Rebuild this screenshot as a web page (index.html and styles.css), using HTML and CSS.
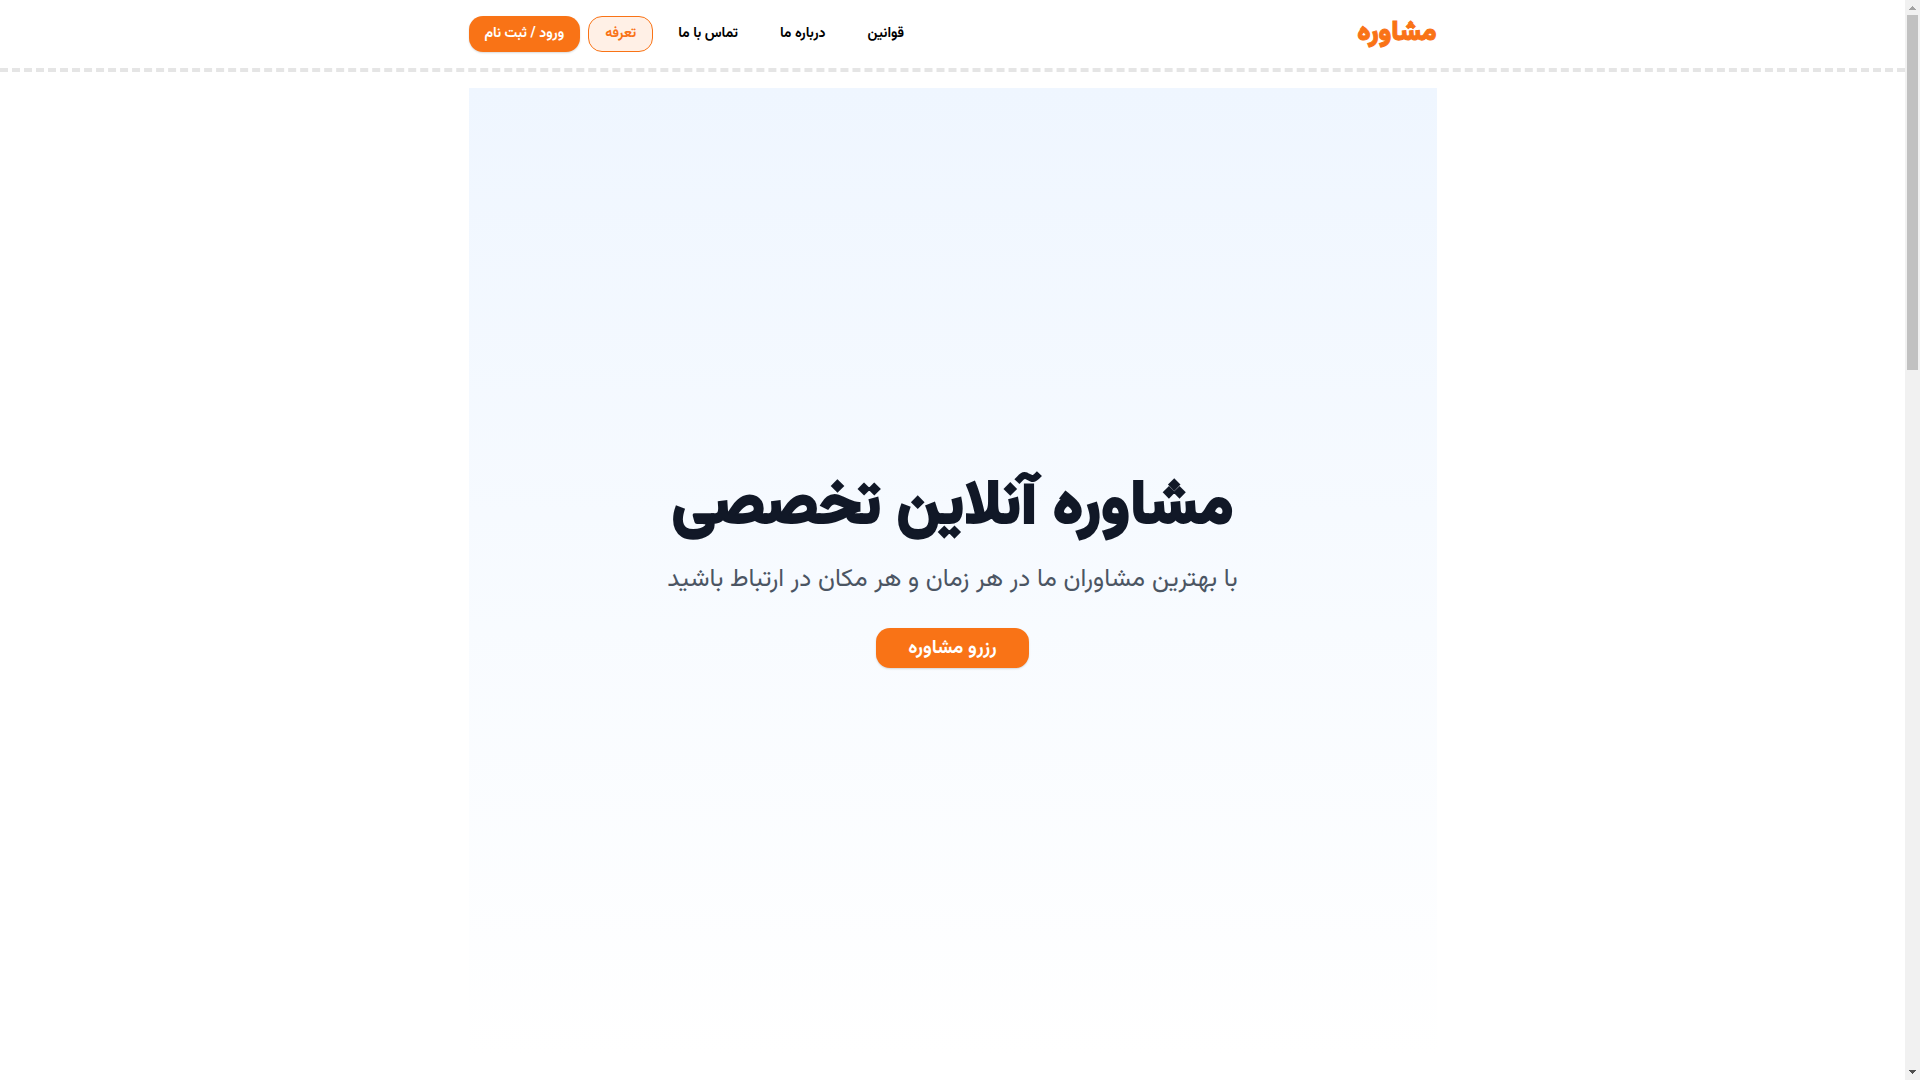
FILE: index.html
```html
<!DOCTYPE html>
<html lang="fa" dir="rtl">
<head>
    <meta charset="UTF-8">
    <meta name="viewport" content="width=device-width, initial-scale=1.0">
    <title>مشاوره</title>
    <link rel="stylesheet" href="styles.css">
</head>
<body>
    <header class="header">
        <div class="container header-inner">
            <a class="logo" href="#">مشاوره</a>
            <nav class="nav">
                <a class="nav-link" href="#">قوانین</a>
                <a class="nav-link" href="#">درباره ما</a>
                <a class="nav-link" href="#">تماس با ما</a>
                <a class="nav-link nav-link-active" href="#">تعرفه</a>
                <button class="btn btn-login" type="button">ورود / ثبت نام</button>
            </nav>
        </div>
    </header>

    <main class="container">
        <section class="hero">
            <h1 class="hero-title">مشاوره آنلاین تخصصی</h1>
            <p class="hero-text">با بهترین مشاوران ما در هر زمان و هر مکان در ارتباط باشید</p>
            <button class="btn btn-reserve" type="button">رزرو مشاوره</button>
        </section>
    </main>

    <div class="scrollbar" aria-hidden="true">
        <svg class="scrollbar-arrow" viewBox="0 0 15 15"><path d="M4 10h7v-1h-1v-1h-1v-1h-1v-1h-1v1h-1v1h-1v1h-1z" fill="#a3a3a3"/></svg>
        <div class="scrollbar-track"><div class="scrollbar-thumb"></div></div>
        <svg class="scrollbar-arrow" viewBox="0 0 15 15"><path d="M4 5h7v1h-1v1h-1v1h-1v1h-1v-1h-1v-1h-1v-1h-1z" fill="#505050"/></svg>
    </div>
</body>
</html>
```
FILE: styles.css
```css
* {
    margin: 0;
    padding: 0;
    box-sizing: border-box;
}

body {
    min-height: 100vh;
    padding-right: 15px;
    background: #fff;
    color: #000;
    font-family: "Vazirmatn", "Noto Sans Arabic", "DejaVu Sans", sans-serif;
}

.container {
    max-width: 1000px;
    margin: 0 auto;
    padding: 0 16px;
}

.header {
    padding: 16px 0;
    border-bottom: 4px dashed #e5e5e5;
}

.header-inner,
.nav {
    display: flex;
    align-items: center;
}

.header-inner {
    justify-content: space-between;
}

.nav {
    gap: 8px;
}

.logo {
    color: #f97316;
    font-size: 27px;
    font-weight: 900;
    line-height: 32px;
    text-decoration: none;
    -webkit-text-stroke: 1px currentColor;
}

.nav-link {
    height: 36px;
    padding: 0 16px;
    border: 1px solid transparent;
    border-radius: 14px;
    color: #000;
    font-size: 14px;
    font-weight: 700;
    line-height: 34px;
    text-decoration: none;
    white-space: nowrap;
}

.nav-link-active {
    border-color: #f97316;
    background: #fff0e6;
    color: #f97316;
}

.btn {
    border: none;
    border-radius: 14px;
    background: #f97316;
    box-shadow: 0 1px 2px rgba(0, 0, 0, 0.15);
    color: #fff;
    font-family: inherit;
    font-weight: 700;
    white-space: nowrap;
    cursor: pointer;
}

.btn-login {
    height: 36px;
    padding: 0 16px;
    font-size: 14px;
}

.hero {
    display: flex;
    flex-direction: column;
    align-items: center;
    justify-content: center;
    min-height: calc(100vh - 112px);
    margin-top: 16px;
    background: linear-gradient(#eff6ff, #fff);
    text-align: center;
}

.hero-title {
    margin-bottom: 24px;
    color: #111827;
    font-size: 62px;
    font-weight: 800;
    line-height: 64px;
    -webkit-text-stroke: 2px currentColor;
}

.hero-text {
    margin-bottom: 32px;
    color: #4b5563;
    font-size: 25px;
    line-height: 32px;
}

.btn-reserve {
    height: 40px;
    padding: 0 32px;
    font-size: 19px;
}

.scrollbar {
    position: fixed;
    top: 0;
    right: 0;
    bottom: 0;
    display: flex;
    flex-direction: column;
    width: 15px;
    background: #f1f1f1;
}

.scrollbar-arrow {
    width: 15px;
    height: 15px;
}

.scrollbar-track {
    flex: 1;
    padding: 0 2px;
}

.scrollbar-thumb {
    height: 355px;
    background: #c1c1c1;
}
```
